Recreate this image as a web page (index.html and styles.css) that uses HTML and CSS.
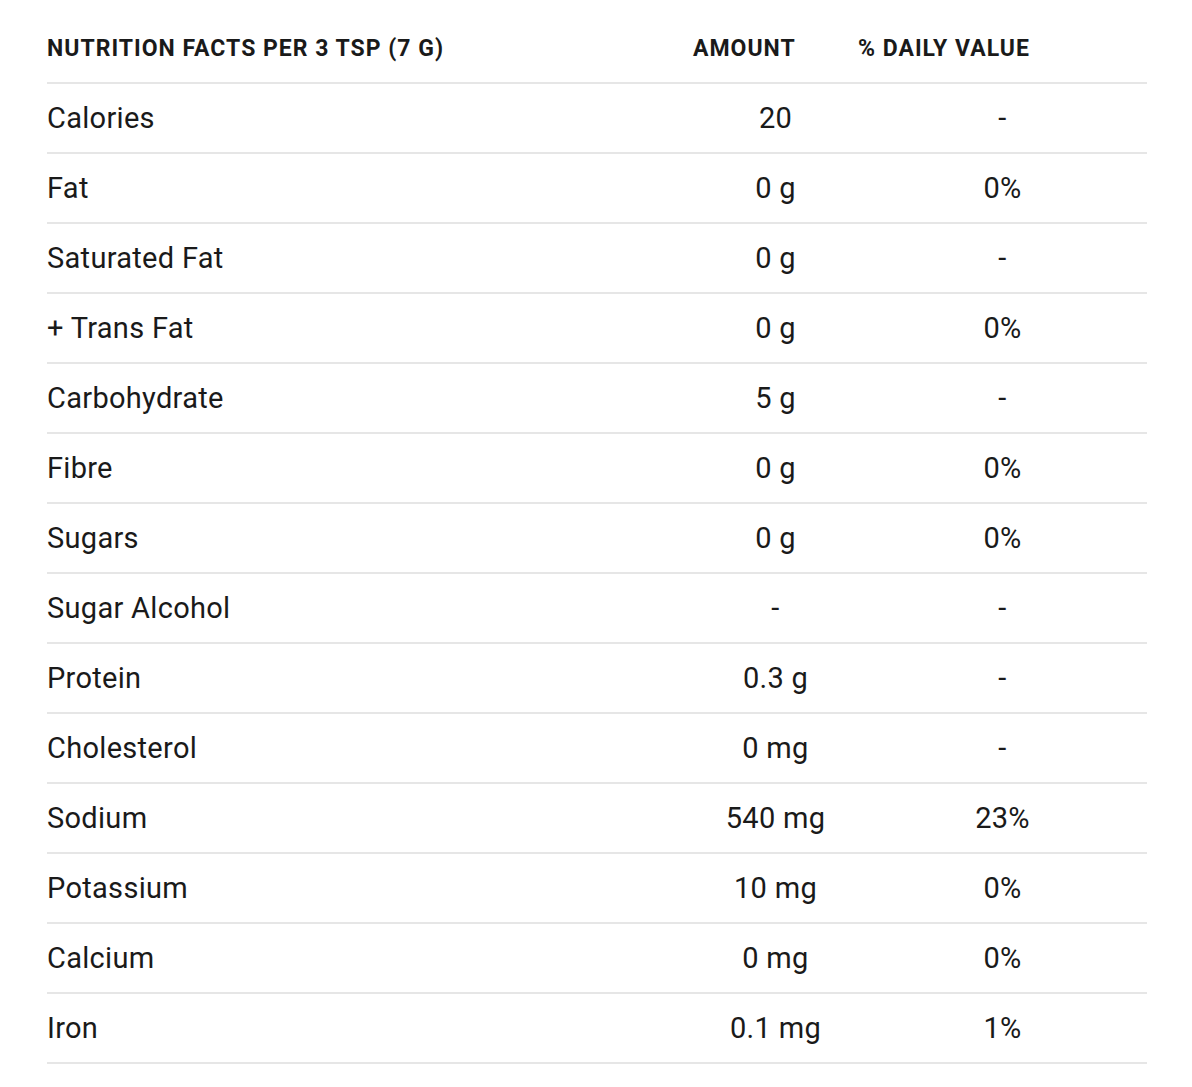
FILE: index.html
```html
<!DOCTYPE html>
<html lang="en">
<head>
<meta charset="utf-8">
<title>Nutrition Facts</title>
<link rel="stylesheet" href="styles.css">
</head>
<body>
<div class="page">
  <div class="facts">
    <div class="row head">
      <div class="cell label">Nutrition facts per 3 tsp (7 g)</div>
      <div class="cell amount">Amount</div>
      <div class="cell dv">% Daily Value</div>
    </div>
    <div class="row"><div class="cell label">Calories</div><div class="cell amount">20</div><div class="cell dv">-</div></div>
    <div class="row"><div class="cell label">Fat</div><div class="cell amount">0 g</div><div class="cell dv">0%</div></div>
    <div class="row"><div class="cell label">Saturated Fat</div><div class="cell amount">0 g</div><div class="cell dv">-</div></div>
    <div class="row"><div class="cell label">+ Trans Fat</div><div class="cell amount">0 g</div><div class="cell dv">0%</div></div>
    <div class="row"><div class="cell label">Carbohydrate</div><div class="cell amount">5 g</div><div class="cell dv">-</div></div>
    <div class="row"><div class="cell label">Fibre</div><div class="cell amount">0 g</div><div class="cell dv">0%</div></div>
    <div class="row"><div class="cell label">Sugars</div><div class="cell amount">0 g</div><div class="cell dv">0%</div></div>
    <div class="row"><div class="cell label">Sugar Alcohol</div><div class="cell amount">-</div><div class="cell dv">-</div></div>
    <div class="row"><div class="cell label">Protein</div><div class="cell amount">0.3 g</div><div class="cell dv">-</div></div>
    <div class="row"><div class="cell label">Cholesterol</div><div class="cell amount">0 mg</div><div class="cell dv">-</div></div>
    <div class="row"><div class="cell label">Sodium</div><div class="cell amount">540 mg</div><div class="cell dv">23%</div></div>
    <div class="row"><div class="cell label">Potassium</div><div class="cell amount">10 mg</div><div class="cell dv">0%</div></div>
    <div class="row"><div class="cell label">Calcium</div><div class="cell amount">0 mg</div><div class="cell dv">0%</div></div>
    <div class="row"><div class="cell label">Iron</div><div class="cell amount">0.1 mg</div><div class="cell dv">1%</div></div>
  </div>
</div>
</body>
</html>
```
FILE: styles.css
```css
html, body {
  margin: 0;
  padding: 0;
  background: #ffffff;
}
.page {
  padding: 14px 45px 0 47px;
  font-family: Roboto, "Liberation Sans", sans-serif;
  color: #1a1a1a;
}
.facts {
  width: 1100px;
}
.row {
  display: grid;
  grid-template-columns: 646px 165px 289px;
  height: 68px;
  align-items: center;
  border-bottom: 2px solid #e6e6e6;
  font-size: 29px;
  letter-spacing: 0.3px;
}
.cell.amount,
.cell.dv {
  text-align: center;
}
.row.head {
  font-size: 23px;
  font-weight: 700;
  text-transform: uppercase;
  letter-spacing: 1px;
}
.row.head .cell {
  text-align: left;
}
```
